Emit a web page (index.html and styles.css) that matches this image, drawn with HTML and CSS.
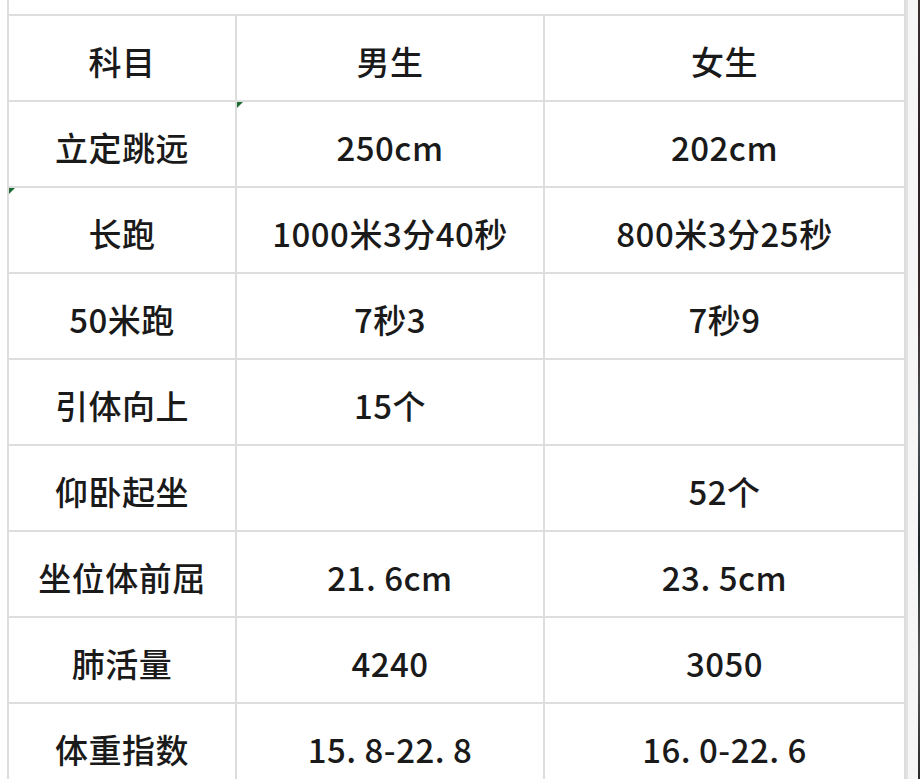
FILE: index.html
```html
<!DOCTYPE html>
<html lang="zh-CN">
<head>
<meta charset="utf-8">
<title>体测标准</title>
<link rel="stylesheet" href="styles.css">
</head>
<body>
<div class="page">
  <div class="sheet">
    <div class="cell top"></div>

    <div class="cell">科目</div>
    <div class="cell">男生</div>
    <div class="cell">女生</div>

    <div class="cell">立定跳远</div>
    <div class="cell flag">250cm</div>
    <div class="cell">202cm</div>

    <div class="cell flag">长跑</div>
    <div class="cell">1000米3分40秒</div>
    <div class="cell">800米3分25秒</div>

    <div class="cell">50米跑</div>
    <div class="cell">7秒3</div>
    <div class="cell">7秒9</div>

    <div class="cell">引体向上</div>
    <div class="cell">15个</div>
    <div class="cell"></div>

    <div class="cell">仰卧起坐</div>
    <div class="cell"></div>
    <div class="cell">52个</div>

    <div class="cell">坐位体前屈</div>
    <div class="cell">21. 6cm</div>
    <div class="cell">23. 5cm</div>

    <div class="cell">肺活量</div>
    <div class="cell">4240</div>
    <div class="cell">3050</div>

    <div class="cell">体重指数</div>
    <div class="cell">15. 8-22. 8</div>
    <div class="cell">16. 0-22. 6</div>
  </div>
  <div class="gutter"></div>
  <div class="photo"></div>
</div>
</body>
</html>
```

FILE: styles.css
```css
html, body {
  margin: 0;
  padding: 0;
  height: 779px;
  overflow: hidden;
  background: #ffffff;
}

.page {
  display: flex;
  height: 779px;
}

.sheet {
  margin-left: 7px;
  width: 897px;
  display: grid;
  grid-template-columns: 226px 306px 359px;
  grid-template-rows: 14px repeat(9, 84px);
  gap: 2px;
  background: #dddddd;
  border-left: 2px solid #dddddd;
  border-right: 2px solid #e2e2e2;
  align-content: start;
  font-family: "Noto Sans CJK SC", "Noto Sans", sans-serif;
  font-weight: 500;
  font-size: 33px;
  color: #1a1a1a;
}

.cell {
  position: relative;
  background: #ffffff;
  display: flex;
  align-items: center;
  justify-content: center;
  padding-top: 6px;
  box-sizing: border-box;
  white-space: nowrap;
  letter-spacing: 0.5px;
}

.cell.top {
  grid-column: 1 / -1;
  padding: 0;
}

.flag::before {
  content: "";
  position: absolute;
  left: 0;
  top: 0;
  width: 0;
  height: 0;
  border-top: 6px solid #1e6b35;
  border-right: 6px solid transparent;
}

.gutter {
  width: 10px;
  background: #f6f6f6;
}

.photo {
  flex: 1;
  background: linear-gradient(180deg, #3a3030 0%, #2b1f22 20%, #3b2a2c 40%, #4c5458 55%, #1d2426 70%, #5a5a58 85%, #2a2a2a 100%);
}
```
